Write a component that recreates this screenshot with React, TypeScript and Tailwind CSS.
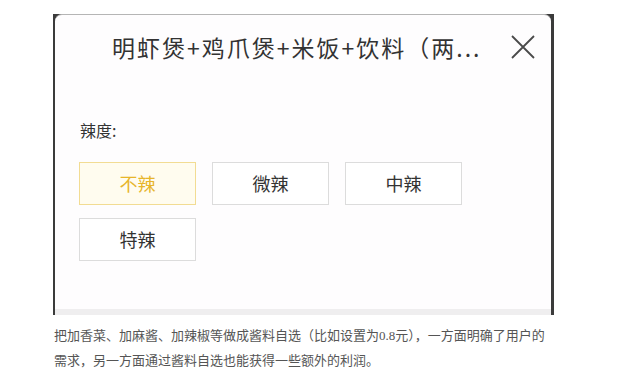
const levels = ["不辣", "微辣", "中辣", "特辣"];

function SpiceOption(props: { label: string; selected?: boolean }) {
  return (
    <button
      className={
        props.selected
          ? "w-[117px] h-[43px] border border-[#f2dc93] bg-[#fffcef] text-[#e7b52a] text-[18px]"
          : "w-[117px] h-[43px] border border-[#dcdcdc] bg-white text-[#333] text-[18px]"
      }
    >
      {props.label}
    </button>
  );
}

export default function App() {
  return (
    <div className="w-[640px] h-[388px] bg-white" style={{ fontFamily: '"Noto Sans CJK SC", "Noto Sans", sans-serif' }}>
      <div className="pt-[14px] pl-[53px]">
        <div className="w-[501px] h-[301px] bg-[#3b3b3b] pl-[2px] pr-[3px] flex">
          <div className="flex-1 flex flex-col bg-[#fefdfe] border-t border-[#b5b5b5] rounded-t-[7px] overflow-hidden">
            <div className="flex items-center h-[64px] pl-[57px] pr-[15px]">
              <h2 className="flex-1 text-[23px] tracking-[2px] text-[#333] whitespace-nowrap">
                明虾煲+鸡爪煲+米饭+饮料（两...
              </h2>
              <svg width="26" height="26" viewBox="0 0 26 26" className="text-[#4a4a4a]">
                <path d="M2 2L24 24M24 2L2 24" stroke="currentColor" strokeWidth="1.8" fill="none" />
              </svg>
            </div>

            <div className="pl-[25px] pt-[38px] text-[16px] text-[#333] leading-[26px]">辣度:</div>

            <div className="pl-[24px] pt-[19px] grid grid-cols-[117px_117px_117px] gap-x-[16px] gap-y-[13px]">
              {levels.map((level, i) => (
                <SpiceOption key={level} label={level} selected={i === 0} />
              ))}
            </div>

            <div className="flex-1" />
            <div className="h-[6px] bg-[#efeeef]" />
          </div>
        </div>
      </div>

      <p
        className="pl-[54px] pt-[8px] text-[13px] leading-[25px] text-[#555] whitespace-nowrap"
        style={{ fontFamily: '"Liberation Serif", "Noto Sans CJK SC", serif' }}
      >
        把加香菜、加麻酱、加辣椒等做成酱料自选（比如设置为0.8元），一方面明确了用户的
        <br />
        需求，另一方面通过酱料自选也能获得一些额外的利润。
      </p>
    </div>
  );
}
